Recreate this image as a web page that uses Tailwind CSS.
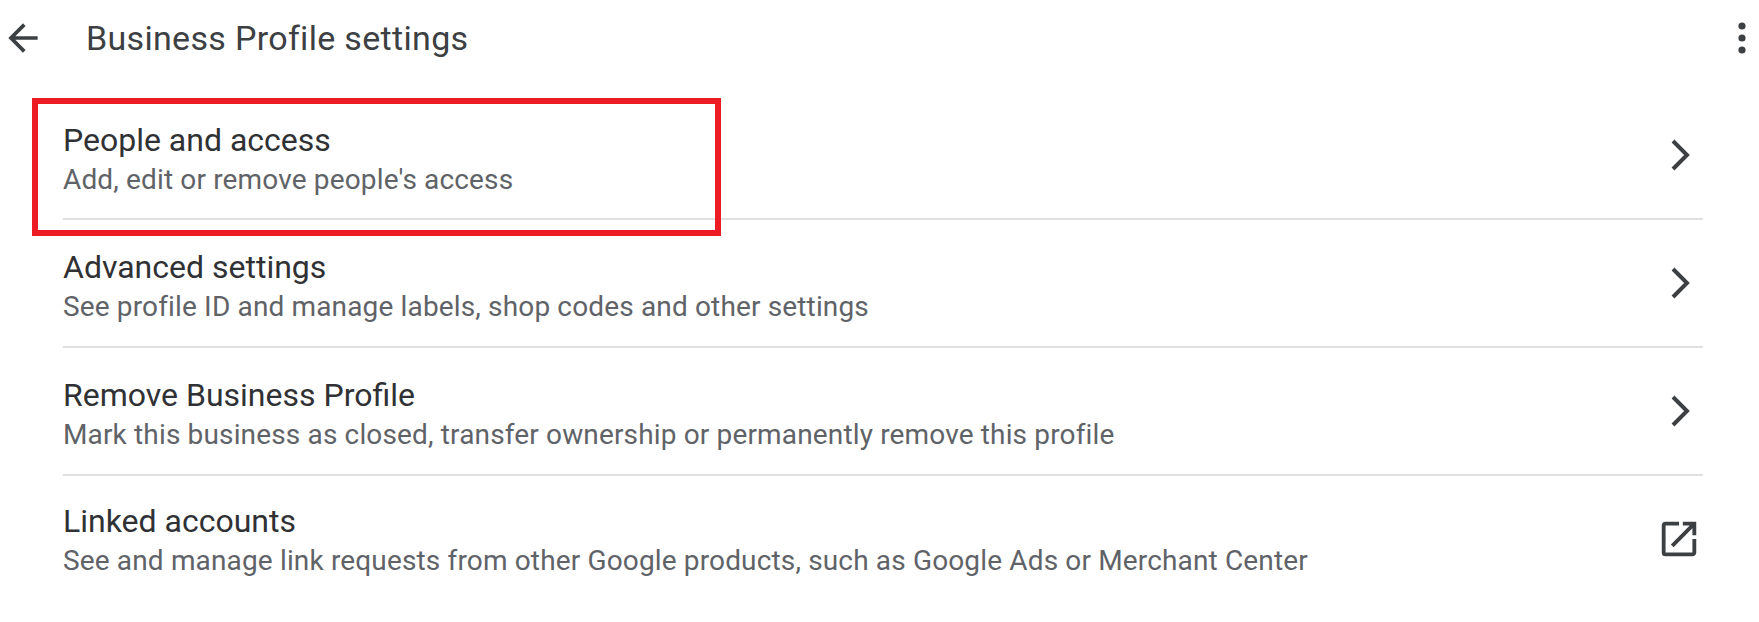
<!DOCTYPE html>
<html lang="en">
<head>
<meta charset="utf-8"/>
<title>Business Profile settings</title>
<script src="https://cdn.jsdelivr.net/npm/@tailwindcss/browser@4"></script>
</head>
<body class="bg-white font-['Roboto',sans-serif] overflow-hidden">
<div class="relative w-[1759px] h-[622px]">
  <header class="flex items-center h-[76px] pl-[1px] pr-[11px]">
    <svg class="w-[44px] h-[44px] text-[#3c4043]" viewBox="0 0 24 24" fill="currentColor"><path d="M20 11H7.83l5.59-5.59L12 4l-8 8 8 8 1.41-1.41L7.83 13H20v-2z"/></svg>
    <h1 class="ml-[41px] text-[34px] leading-[40px] tracking-[0.32px] text-[#3c4043] flex-1">Business Profile settings</h1>
    <svg class="w-[12px] h-[36px] text-[#3c4043]" viewBox="0 0 12 36" fill="currentColor"><circle cx="6" cy="6" r="3.6"/><circle cx="6" cy="18" r="3.6"/><circle cx="6" cy="30" r="3.6"/></svg>
  </header>
  <ul class="ml-[63px] mr-[56px] mt-[16px]">
    <li class="flex items-center justify-between h-[128px] border-b-2 border-[#e0e0e0]">
      <div class="pt-[9px]">
        <div class="text-[32px] leading-[40px] text-[#303134]">People and access</div>
        <div class="text-[28px] leading-[40px] tracking-[0.15px] text-[#5f6368]">Add, edit or remove people's access</div>
      </div>
      <svg class="w-[20px] h-[34px] mr-[13px] text-[#3c4043]" viewBox="0 0 20 34" fill="none" stroke="currentColor" stroke-width="4"><path d="M3 3l14 14L3 31"/></svg>
    </li>
    <li class="flex items-center justify-between h-[128px] border-b-2 border-[#e0e0e0]">
      <div class="pt-[8px]">
        <div class="text-[32px] leading-[40px] text-[#303134]">Advanced settings</div>
        <div class="text-[28px] leading-[40px] tracking-[0.15px] text-[#5f6368]">See profile ID and manage labels, shop codes and other settings</div>
      </div>
      <svg class="w-[20px] h-[34px] mr-[13px] text-[#3c4043]" viewBox="0 0 20 34" fill="none" stroke="currentColor" stroke-width="4"><path d="M3 3l14 14L3 31"/></svg>
    </li>
    <li class="flex items-center justify-between h-[128px] border-b-2 border-[#e0e0e0]">
      <div class="pt-[8px]">
        <div class="text-[32px] leading-[40px] text-[#303134]">Remove Business Profile</div>
        <div class="text-[28px] leading-[40px] tracking-[0.15px] text-[#5f6368]">Mark this business as closed, transfer ownership or permanently remove this profile</div>
      </div>
      <svg class="w-[20px] h-[34px] mr-[13px] text-[#3c4043]" viewBox="0 0 20 34" fill="none" stroke="currentColor" stroke-width="4"><path d="M3 3l14 14L3 31"/></svg>
    </li>
    <li class="flex items-center justify-between h-[128px]">
      <div class="pt-[2px]">
        <div class="text-[32px] leading-[40px] text-[#303134]">Linked accounts</div>
        <div class="text-[28px] leading-[40px] tracking-[0.15px] text-[#5f6368]">See and manage link requests from other Google products, such as Google Ads or Merchant Center</div>
      </div>
      <svg class="w-[46px] h-[46px] mr-[1px] mb-[2px] text-[#3c4043]" viewBox="0 0 24 24" fill="currentColor"><path d="M19 19H5V5h7V3H5a2 2 0 0 0-2 2v14a2 2 0 0 0 2 2h14c1.1 0 2-.9 2-2v-7h-2v7zM14 3v2h3.59l-9.83 9.83 1.41 1.41L19 6.41V10h2V3h-7z"/></svg>
    </li>
  </ul>
  <div class="absolute left-[32px] top-[98px] w-[689px] h-[138px] border-[6px] border-[#ed1c24]"></div>
</div>
</body>
</html>
